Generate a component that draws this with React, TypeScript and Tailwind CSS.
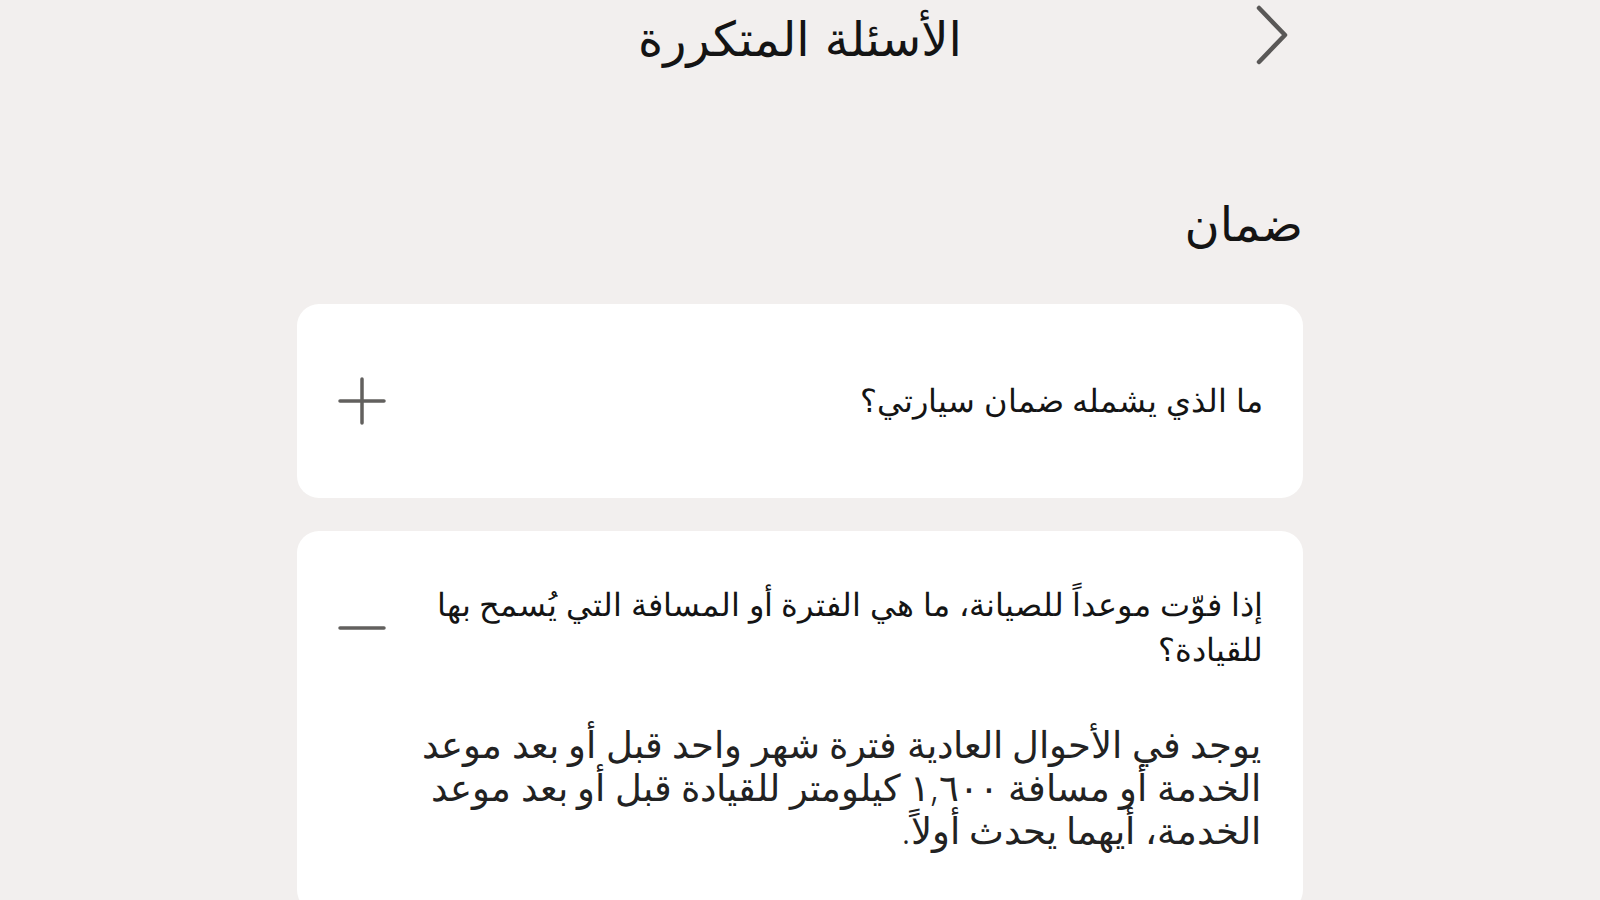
import React, { useState } from 'react';

interface FaqItem {
  id: string;
  question: string;
  answer: string;
}

const faqs: FaqItem[] = [
  {
    id: 'coverage',
    question: 'ما الذي يشمله ضمان سيارتي؟',
    answer: '',
  },
  {
    id: 'missed-service',
    question: 'إذا فوّت موعداً للصيانة، ما هي الفترة أو المسافة التي يُسمح بها للقيادة؟',
    answer:
      'يوجد في الأحوال العادية فترة شهر واحد قبل أو بعد موعد الخدمة أو مسافة ١,٦٠٠ كيلومتر للقيادة قبل أو بعد موعد الخدمة، أيهما يحدث أولاً.',
  },
];

const PlusIcon = () => (
  <svg width="48" height="48" viewBox="0 0 48 48" fill="none" stroke="#62605e" strokeWidth="3.5" strokeLinecap="round">
    <path d="M24 2v44M2 24h44" />
  </svg>
);

const MinusIcon = () => (
  <svg width="48" height="48" viewBox="0 0 48 48" fill="none" stroke="#62605e" strokeWidth="3.5" strokeLinecap="round">
    <path d="M2 24h44" />
  </svg>
);

const App: React.FC = () => {
  const [openId, setOpenId] = useState<string | null>('missed-service');

  return (
    <div
      dir="rtl"
      className="min-h-screen bg-[#f2efee] text-[#141414]"
      style={{ fontFamily: '"DejaVu Sans", "Noto Sans", sans-serif' }}
    >
      <div className="w-[1006px] mx-auto">
        {/* Header */}
        <header className="grid grid-cols-[1fr_auto_1fr] items-center h-[78px]">
          <div className="flex justify-start pr-[14px] -mt-[8px]">
            <button className="text-[#5a5857]" aria-label="رجوع">
              <svg width="34" height="62" viewBox="0 0 34 62" fill="none" stroke="currentColor" strokeWidth="4.5" strokeLinecap="round" strokeLinejoin="round">
                <path d="M4 4l26 27L4 58" />
              </svg>
            </button>
          </div>
          <h1 className="text-[48px] leading-none font-normal">الأسئلة المتكررة</h1>
          <div />
        </header>

        {/* Section title */}
        <h2 className="mt-[122px] text-[48px] leading-none font-normal">ضمان</h2>

        {/* FAQ list */}
        <div className="mt-[56px] flex flex-col gap-[33px]">
          {faqs.map((faq) => {
            const open = openId === faq.id;
            return (
              <div key={faq.id} className="bg-white rounded-[22px]">
                <button
                  onClick={() => setOpenId(open ? null : faq.id)}
                  className={`w-full flex items-center justify-between gap-[44px] pr-[40px] pl-[41px] text-right ${
                    open ? 'pt-[52px]' : 'h-[194px]'
                  }`}
                >
                  <span
                    className="flex-1 text-[31.5px] leading-[45px]"
                    style={{ fontFamily: '"Liberation Sans", Arial, sans-serif' }}
                  >
                    {faq.question}
                  </span>
                  {open ? <MinusIcon /> : <PlusIcon />}
                </button>
                {open && faq.answer && (
                  <p
                    className="pr-[42px] pl-[118px] pt-[50px] pb-[60px] text-[36.5px] leading-[43px] font-light text-[#222]"
                    style={{ fontFamily: '"Noto Sans", "DejaVu Sans", sans-serif' }}
                  >
                    {faq.answer}
                  </p>
                )}
              </div>
            );
          })}
        </div>
      </div>
    </div>
  );
};

export default App;
